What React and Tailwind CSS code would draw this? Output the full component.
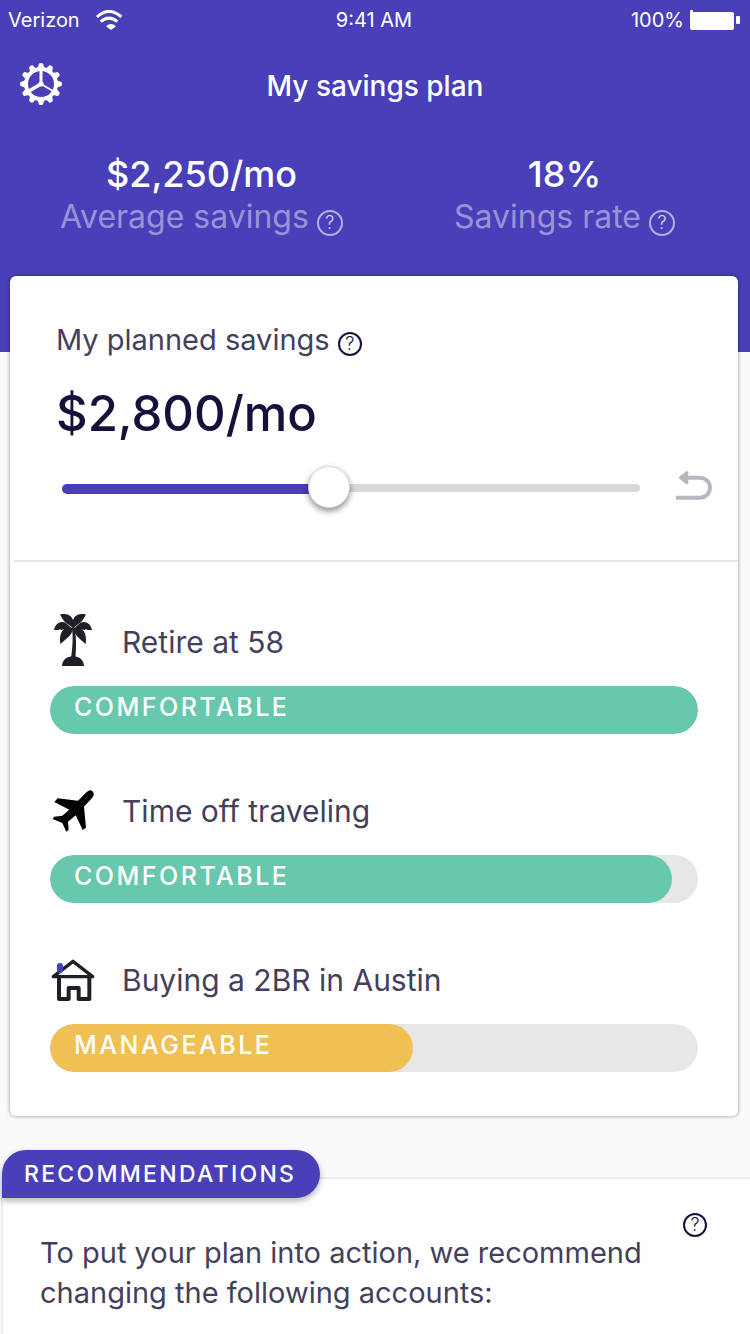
import React, { useState } from "react";

const DEFAULT_SAVINGS = 2800;
const MAX_SAVINGS = 6100;

const goals = [
  { id: "retire", title: "Retire at 58", status: "Comfortable", percent: 100, color: "bg-[#68c8ad]", Icon: PalmIcon },
  { id: "travel", title: "Time off traveling", status: "Comfortable", percent: 96, color: "bg-[#68c8ad]", Icon: PlaneIcon },
  { id: "house", title: "Buying a 2BR in Austin", status: "Manageable", percent: 56, color: "bg-[#f0c052]", Icon: HouseIcon },
];

function WifiIcon() {
  return (
    <svg className="w-[26px] h-5" viewBox="288 30 78 60" fill="none" stroke="white" strokeWidth="9">
      <path d="M291 51Q327 18 364 51" />
      <path d="M302 65Q327 44 352 65" />
      <path d="M318 79Q333 65 348 79L333 90Z" fill="white" stroke="none" />
    </svg>
  );
}

function BatteryIcon() {
  return (
    <svg className="w-[50px] h-5" viewBox="0 0 50 20" fill="white">
      <rect x="0" y="2" width="44" height="18" rx="2" />
      <rect x="46" y="6" width="4" height="8" rx="1" />
      <rect x="0" y="0" width="3" height="4" rx="1" />
    </svg>
  );
}

function GearIcon() {
  const teeth = [0, 30, 60, 90, 120, 150, 180, 210, 240, 270, 300, 330];
  return (
    <svg className="w-[42px] h-[42px]" viewBox="-21 -21 42 42" fill="none" stroke="white">
      <circle r="15" strokeWidth="4" />
      {teeth.map((angle) => (
        <path key={angle} d="M-3.4-16L-2-20.4Q0-21.6 2-20.4L3.4-16Z" fill="white" stroke="none" transform={`rotate(${angle})`} />
      ))}
      <path d="M0-14V0" strokeWidth="3" />
      <path d="M0 0L12 7" strokeWidth="2" />
      <path d="M0 0L-12 7" strokeWidth="3.4" />
      <circle r="2.6" fill="white" stroke="none" />
    </svg>
  );
}

function UndoIcon() {
  return (
    <svg className="w-9 h-[34px]" viewBox="228 91 108 102" fill="none" stroke="#b8b6c2" strokeWidth="12">
      <path d="M228 174H300A30 30 0 0 0 300 114H250" />
      <path d="M264 97L242 114L264 131Z" fill="#b8b6c2" stroke="none" />
      <path d="M264 97L242 114L264 131" strokeWidth="10" strokeLinejoin="round" />
    </svg>
  );
}

function PalmIcon() {
  return (
    <svg className="w-[38px] h-14" viewBox="72 66 114 168" fill="#1f1f27">
      <path d="M125 106C130 130 128 165 123 198H136C140 165 138 130 134 106Z" />
      <path d="M96 222C97 204 110 193 129 193C148 193 161 204 162 222Z" />
      <path d="M90 67C108 63 124 69 129 84C134 69 150 63 168 67C162 79 156 90 147 95L130 108L111 95C102 90 96 79 90 67Z" />
      <path d="M72 114C77 92 94 85 109 94L126 109L112 118L103 112L94 114L90 112L84 114Z" />
      <path d="M186 114C181 92 164 85 149 94L132 109L146 118L155 112L164 114L168 112L174 114Z" />
      <path d="M91 156C87 132 94 113 110 106L128 108C128 124 118 134 109 140L101 148Z" />
      <path d="M167 156C171 132 164 113 148 106L130 108C132 124 142 134 149 140L157 148Z" />
      <path d="M108 93L126 108M150 93L132 108" stroke="#b5b5ba" strokeWidth="1.5" />
    </svg>
  );
}

function PlaneIcon() {
  return (
    <svg className="w-[42px] h-[42px]" viewBox="60 65 126 126" fill="black">
      <path d="M138 97L164 71Q173 63 181 68Q189 76 182 87L156 115L162 178L152 185L131 141L108 160L110 184L103 190L91 164L62 152L66 145L91 142L112 124L67 101L77 90Z" />
    </svg>
  );
}

function HouseIcon() {
  return (
    <svg className="w-11 h-[42px]" viewBox="66 54 132 126" fill="none" stroke="#1f1f27" strokeWidth="12" strokeLinejoin="round">
      <path d="M73 107L132 61L191 107Z" strokeWidth="10" />
      <path d="M90 108V174H119V141H149V174H181V108" />
      <rect x="84" y="66" width="18" height="30" rx="9" fill="#483fb9" stroke="none" />
    </svg>
  );
}

function HelpButton({ label, className }) {
  return (
    <button
      type="button"
      aria-label={label}
      className={`shrink-0 rounded-full border-2 flex items-center justify-center text-lg leading-none font-light ${className}`}
    >
      ?
    </button>
  );
}

function Stat({ value, label }) {
  return (
    <div className="flex flex-col items-center">
      <p className="text-4xl leading-[44px] font-medium text-white">{value}</p>
      <div className="flex items-end gap-2">
        <p className="text-[32px] leading-[42px] text-white/45">{label}</p>
        <HelpButton label={`About ${label}`} className="w-[26px] h-[26px] mb-0.5 border-white/60 text-white/80" />
      </div>
    </div>
  );
}

function GoalRow({ goal }) {
  const { Icon } = goal;
  return (
    <li>
      <div className="flex items-center gap-[26px] h-14">
        <span className="w-[46px] flex justify-center">
          <Icon />
        </span>
        <h2 className="text-[30px] leading-10 text-[#433f5c]">{goal.title}</h2>
      </div>
      <div className="mt-4 h-12 rounded-full bg-[#e7e7e9] overflow-hidden">
        <div
          className={`h-full rounded-full flex items-center pl-6 pb-1 ${goal.color}`}
          style={{ width: `${goal.percent}%` }}
        >
          <span className="text-[25px] font-medium uppercase tracking-widest text-white">{goal.status}</span>
        </div>
      </div>
    </li>
  );
}

export default function App() {
  const [savings, setSavings] = useState(DEFAULT_SAVINGS);
  const fill = (savings / MAX_SAVINGS) * 100;

  return (
    <div className="min-h-screen flex flex-col bg-[#fafafa] font-['Inter','Liberation_Sans',sans-serif]">
      <header className="bg-[#483fb9] text-white pb-[114px]">
        {/* Status bar */}
        <div className="grid grid-cols-3 items-center h-10 pl-2 pr-2.5 text-xl">
          <div className="flex items-center gap-4">
            <span>Verizon</span>
            <WifiIcon />
          </div>
          <span className="text-center">9:41 AM</span>
          <div className="flex items-center justify-end gap-1.5">
            <span>100%</span>
            <BatteryIcon />
          </div>
        </div>

        <div className="grid grid-cols-[42px_1fr_42px] items-center px-5 h-[88px]">
          <button type="button" aria-label="Settings">
            <GearIcon />
          </button>
          <h1 className="pt-1 text-center text-[28px] font-medium">My savings plan</h1>
        </div>

        <div className="grid grid-cols-2 pl-5 pr-1 mt-6">
          <Stat value="$2,250/mo" label="Average savings" />
          <Stat value="18%" label="Savings rate" />
        </div>
      </header>

      <main className="flex-1 flex flex-col">
        <div className="-mt-[76px] ml-2.5 mr-3 bg-white rounded-md shadow-[0_0_4px_rgba(0,0,0,0.4)]">
          {/* Planned savings */}
          <section className="pt-11 pb-[52px]">
            <div className="flex items-end gap-2 pl-[46px]">
              <label htmlFor="planned" className="text-[29px] leading-10 text-[#433f5c]">
                My planned savings
              </label>
              <HelpButton label="About planned savings" className="w-6 h-6 mb-1 border-[#15113a] text-[#15113a]" />
            </div>
            <p className="mt-6 pl-[46px] text-[49px] leading-[60px] font-medium text-[#15113a]">
              ${savings.toLocaleString("en-US")}/mo
            </p>
            <div className="mt-[22px] pl-[52px] pr-[26px] flex items-center gap-9">
              <div className="relative flex-1 h-[42px]">
                <div className="absolute inset-x-0 top-[18px] h-2 rounded-full bg-[#d8d8d8]" />
                <div
                  className="absolute left-0 top-[18px] h-2.5 rounded-full bg-[#483fb9]"
                  style={{ width: `${fill}%` }}
                />
                <input
                  id="planned"
                  type="range"
                  min="0"
                  max={MAX_SAVINGS}
                  step="50"
                  value={savings}
                  onChange={(e) => setSavings(Number(e.target.value))}
                  className="relative block w-full h-[42px] appearance-none bg-transparent cursor-pointer [&::-webkit-slider-thumb]:appearance-none [&::-webkit-slider-thumb]:w-[42px] [&::-webkit-slider-thumb]:h-[42px] [&::-webkit-slider-thumb]:rounded-full [&::-webkit-slider-thumb]:bg-white [&::-webkit-slider-thumb]:border [&::-webkit-slider-thumb]:border-[#d8d8d8] [&::-webkit-slider-thumb]:shadow-[0_3px_6px_rgba(0,0,0,0.45)]"
                />
              </div>
              <button type="button" aria-label="Reset planned savings" onClick={() => setSavings(DEFAULT_SAVINGS)}>
                <UndoIcon />
              </button>
            </div>
          </section>

          <hr className="ml-1 border-t-2 border-[#e7e7e9]" />

          {/* Goals */}
          <ul className="px-10 pt-[52px] pb-11 flex flex-col gap-[49px]">
            {goals.map((goal) => (
              <GoalRow key={goal.id} goal={goal} />
            ))}
          </ul>
        </div>

        {/* Recommendations */}
        <section className="flex-1 mt-[61px] ml-px bg-white border-t-2 border-l-2 border-[#ececec]">
          <h2 className="relative w-fit -mt-[29px] -ml-px h-12 flex items-center pl-[22px] pr-6 rounded-full rounded-bl-none bg-[#483fb9] text-[23px] font-medium uppercase tracking-widest text-white shadow-[0_3px_6px_rgba(0,0,0,0.3)]">
            Recommendations
          </h2>
          <div className="flex items-start gap-6 pl-[37px] pr-[43px] pt-[15px]">
            <p className="flex-1 pt-5 text-[29px] leading-10 text-[#433f5c]">
              To put your plan into action, we recommend changing the following accounts:
            </p>
            <HelpButton label="About recommendations" className="w-6 h-6 border-[#15113a] text-[#15113a]" />
          </div>
        </section>
      </main>
    </div>
  );
}
